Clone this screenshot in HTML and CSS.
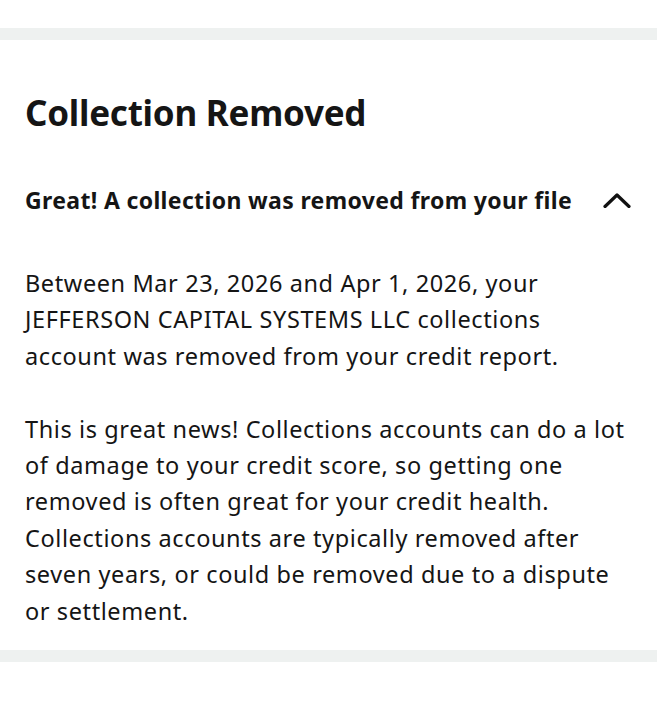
FILE: index.html
```html
<!DOCTYPE html>
<html lang="en">
<head>
<meta charset="utf-8">
<title>Collection Removed</title>
<link rel="stylesheet" href="styles.css">
</head>
<body>
<div class="page">
  <div class="band"></div>
  <section class="card">
    <h1 class="title">Collection Removed</h1>
    <div class="accordion-head">
      <h2 class="subtitle">Great! A collection was removed from your file</h2>
      <svg class="chevron" width="28" height="16" viewBox="0 0 28 16" aria-hidden="true">
        <polyline points="2,14.5 14,3 26,14.5" fill="none" stroke="#111" stroke-width="3.2" stroke-linecap="round" stroke-linejoin="round"/>
      </svg>
    </div>
    <div class="body">
      <p>Between Mar 23, 2026 and Apr 1, 2026, your JEFFERSON CAPITAL SYSTEMS LLC collections account was removed from your credit report.</p>
      <p>This is great news! Collections accounts can do a lot of damage to your credit score, so getting one removed is often great for your credit health. Collections accounts are typically removed after seven years, or could be removed due to a dispute or settlement.</p>
    </div>
  </section>
  <div class="band"></div>
</div>
</body>
</html>
```

FILE: styles.css
```css
html, body {
  margin: 0;
  padding: 0;
  background: #ffffff;
}

body {
  font-family: "Noto Sans", "Liberation Sans", sans-serif;
  color: #151515;
}

.page {
  padding-top: 28px;
}

.band {
  height: 12px;
  background: #eef1f0;
}

.card {
  padding: 51px 25px 21px 25px;
}

.title {
  margin: 0;
  font-size: 35px;
  line-height: 44px;
  font-weight: 700;
  letter-spacing: -0.25px;
}

.accordion-head {
  display: flex;
  align-items: center;
  justify-content: space-between;
  margin-top: 50px;
}

.subtitle {
  margin: 0;
  font-size: 23px;
  line-height: 30px;
  font-weight: 700;
  letter-spacing: 0.35px;
}

.chevron {
  margin-right: 1px;
  flex: none;
}

.body {
  margin-top: 50px;
}

.body p {
  margin: 0 0 36.4px 0;
  font-size: 23.5px;
  line-height: 36.4px;
  font-weight: 400;
  letter-spacing: 0.6px;
}

.body p:last-child {
  margin-bottom: 0;
}
```
